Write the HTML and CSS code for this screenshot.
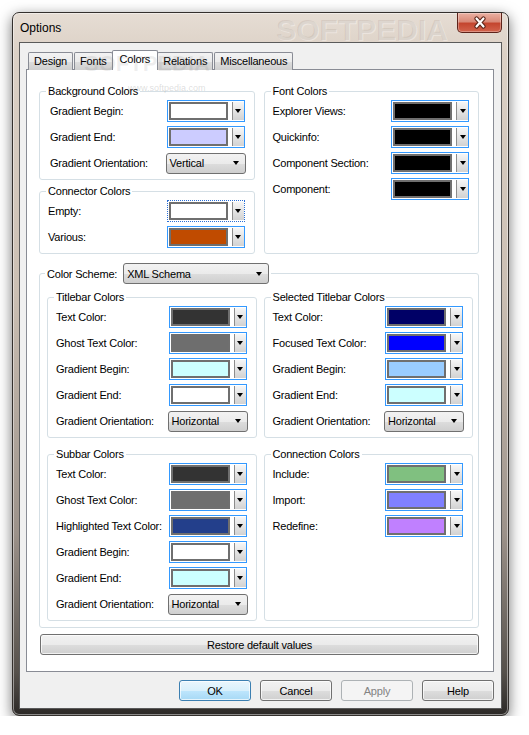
FILE: index.html
```html
<!DOCTYPE html>
<html lang="en">
  <head>
    <meta charset="UTF-8" />
    <meta name="viewport" content="width=device-width, initial-scale=1.0" />
    <title>Options</title>
    <link rel="stylesheet" href="styles.css">
  </head>
  <body>
    <div class="window">
      <div class="titlebar">
        <span class="title">Options</span>
        <span class="mark">SOFTPEDIA</span>
        <button class="close" aria-label="Close">
          <svg width="16" height="13" viewBox="0 0 16 13">
            <path d="M4.5 2.5 L11.5 10.5 M11.5 2.5 L4.5 10.5" stroke="#5a2418" stroke-width="4.2" stroke-linecap="round" fill="none" />
            <path d="M4.5 2.5 L11.5 10.5 M11.5 2.5 L4.5 10.5" stroke="#fff" stroke-width="2.2" stroke-linecap="round" fill="none" />
          </svg>
        </button>
      </div>

      <div class="client">
        <span class="mark-tabs">SOFTPEDIA</span>
        <span class="mark-url">www.softpedia.com</span>

        <div class="tabs">
          <div class="tab">Design</div>
          <div class="tab">Fonts</div>
          <div class="tab active">Colors</div>
          <div class="tab">Relations</div>
          <div class="tab">Miscellaneous</div>
        </div>

        <div class="panel">
          <div class="top-row">
            <div class="col">
              <fieldset class="group indent">
                <legend>Background Colors</legend>
                <div class="row"><label>Gradient Begin:</label><div class="picker"><span class="swatch" style="background:#ffffff"></span><span class="drop"></span></div></div>
                <div class="row"><label>Gradient End:</label><div class="picker"><span class="swatch" style="background:#ccccff"></span><span class="drop"></span></div></div>
                <div class="row"><label>Gradient Orientation:</label><div class="combo"><span>Vertical</span></div></div>
              </fieldset>

              <fieldset class="group">
                <legend>Connector Colors</legend>
                <div class="row"><label>Empty:</label><div class="picker focused"><span class="swatch" style="background:#ffffff"></span><span class="drop"></span></div></div>
                <div class="row"><label>Various:</label><div class="picker"><span class="swatch" style="background:#c04b00"></span><span class="drop"></span></div></div>
              </fieldset>
            </div>

            <fieldset class="group">
              <legend>Font Colors</legend>
              <div class="row"><label>Explorer Views:</label><div class="picker"><span class="swatch" style="background:#000000"></span><span class="drop"></span></div></div>
              <div class="row"><label>Quickinfo:</label><div class="picker"><span class="swatch" style="background:#000000"></span><span class="drop"></span></div></div>
              <div class="row"><label>Component Section:</label><div class="picker"><span class="swatch" style="background:#000000"></span><span class="drop"></span></div></div>
              <div class="row"><label>Component:</label><div class="picker"><span class="swatch" style="background:#000000"></span><span class="drop"></span></div></div>
            </fieldset>
          </div>

          <fieldset class="group scheme">
            <legend><span>Color Scheme:</span><div class="combo wide"><span>XML Schema</span></div></legend>

            <div class="inner">
              <fieldset class="group">
                <legend>Titlebar Colors</legend>
                <div class="row"><label>Text Color:</label><div class="picker"><span class="swatch" style="background:#333333"></span><span class="drop"></span></div></div>
                <div class="row"><label>Ghost Text Color:</label><div class="picker"><span class="swatch" style="background:#6e6e6e"></span><span class="drop"></span></div></div>
                <div class="row"><label>Gradient Begin:</label><div class="picker"><span class="swatch" style="background:#ccffff"></span><span class="drop"></span></div></div>
                <div class="row"><label>Gradient End:</label><div class="picker"><span class="swatch" style="background:#ffffff"></span><span class="drop"></span></div></div>
                <div class="row"><label>Gradient Orientation:</label><div class="combo"><span>Horizontal</span></div></div>
              </fieldset>

              <fieldset class="group">
                <legend>Selected Titlebar Colors</legend>
                <div class="row"><label>Text Color:</label><div class="picker"><span class="swatch" style="background:#000066"></span><span class="drop"></span></div></div>
                <div class="row"><label>Focused Text Color:</label><div class="picker"><span class="swatch" style="background:#0000ff"></span><span class="drop"></span></div></div>
                <div class="row"><label>Gradient Begin:</label><div class="picker"><span class="swatch" style="background:#99ccff"></span><span class="drop"></span></div></div>
                <div class="row"><label>Gradient End:</label><div class="picker"><span class="swatch" style="background:#ccffff"></span><span class="drop"></span></div></div>
                <div class="row"><label>Gradient Orientation:</label><div class="combo"><span>Horizontal</span></div></div>
              </fieldset>

              <fieldset class="group">
                <legend>Subbar Colors</legend>
                <div class="row"><label>Text Color:</label><div class="picker"><span class="swatch" style="background:#333333"></span><span class="drop"></span></div></div>
                <div class="row"><label>Ghost Text Color:</label><div class="picker"><span class="swatch" style="background:#6e6e6e"></span><span class="drop"></span></div></div>
                <div class="row"><label>Highlighted Text Color:</label><div class="picker"><span class="swatch" style="background:#233f8b"></span><span class="drop"></span></div></div>
                <div class="row"><label>Gradient Begin:</label><div class="picker"><span class="swatch" style="background:#ffffff"></span><span class="drop"></span></div></div>
                <div class="row"><label>Gradient End:</label><div class="picker"><span class="swatch" style="background:#ccffff"></span><span class="drop"></span></div></div>
                <div class="row"><label>Gradient Orientation:</label><div class="combo"><span>Horizontal</span></div></div>
              </fieldset>

              <fieldset class="group">
                <legend>Connection Colors</legend>
                <div class="row"><label>Include:</label><div class="picker"><span class="swatch" style="background:#80c080"></span><span class="drop"></span></div></div>
                <div class="row"><label>Import:</label><div class="picker"><span class="swatch" style="background:#8080ff"></span><span class="drop"></span></div></div>
                <div class="row"><label>Redefine:</label><div class="picker"><span class="swatch" style="background:#c080ff"></span><span class="drop"></span></div></div>
              </fieldset>
            </div>
          </fieldset>

          <button class="btn restore">Restore default values</button>
        </div>

        <div class="buttons">
          <button class="btn default">OK</button>
          <button class="btn">Cancel</button>
          <button class="btn" disabled>Apply</button>
          <button class="btn">Help</button>
        </div>
      </div>
    </div>
  </body>
</html>
```

FILE: styles.css
```css
* {
  box-sizing: border-box;
}

body {
  margin: 0;
  background: #fff;
  font-family: "Liberation Sans", Arial, sans-serif;
  font-size: 11px;
  letter-spacing: -0.2px;
  color: #000;
}

/* Window frame */
.window {
  position: relative;
  display: flex;
  flex-direction: column;
  width: 497px;
  height: 704px;
  margin: 12px 0 0 12px;
  padding: 0 6px 6px;
  border: 1px solid #34302d;
  border-radius: 7px;
  background: linear-gradient(180deg, #e6ddd4 0px, #dcd1c6 40px, #cbbfb3 280px, #9c928a 520px, #55504b 660px, #2a2725 704px);
  box-shadow: 0 4px 14px rgba(0, 0, 0, 0.55), inset 0 0 0 1px rgba(255, 255, 255, 0.45);
}

.titlebar {
  position: relative;
  display: flex;
  align-items: center;
  height: 29px;
}

.title {
  padding-left: 1px;
  font-size: 12px;
  letter-spacing: 0;
}

.mark {
  position: absolute;
  left: 257px;
  top: 0;
  font-size: 30px;
  font-weight: bold;
  letter-spacing: 0;
  color: rgba(140, 128, 116, 0.16);
  text-shadow: 1px 1px 0 rgba(255, 255, 255, 0.35);
  pointer-events: none;
}

.close {
  align-self: flex-start;
  display: flex;
  align-items: center;
  justify-content: center;
  width: 45px;
  height: 20px;
  margin-left: auto;
  padding: 0;
  border: 1px solid #5d231a;
  border-top: none;
  border-radius: 0 0 5px 5px;
  background: linear-gradient(180deg, #eab0a2 0%, #d98a78 45%, #c4462f 55%, #d2644d 100%);
  box-shadow: inset 0 0 0 1px rgba(255, 255, 255, 0.3);
}

/* Client area */
.client {
  position: relative;
  flex: 1;
  display: flex;
  flex-direction: column;
  padding: 7px 7px 0 6px;
  background: #f0f0f0;
  border: 1px solid #5a5a5a;
}

.mark-tabs {
  position: absolute;
  left: 64px;
  top: 8px;
  z-index: 3;
  font-size: 22px;
  font-weight: bold;
  letter-spacing: 0;
  color: rgba(120, 120, 120, 0.12);
  pointer-events: none;
}

.mark-url {
  position: absolute;
  left: 108px;
  top: 40px;
  z-index: 3;
  font-size: 9px;
  letter-spacing: 0;
  color: rgba(120, 120, 120, 0.25);
  pointer-events: none;
}

.tabs {
  position: relative;
  z-index: 1;
  display: flex;
  align-items: flex-end;
  gap: 1px;
  height: 20px;
  padding-left: 2px;
}

.tab {
  height: 18px;
  padding: 0 5px;
  line-height: 17px;
  border: 1px solid #898c95;
  border-bottom: none;
  border-radius: 2px 2px 0 0;
  background: linear-gradient(180deg, #f3f3f3 0%, #ebebeb 50%, #dddddd 51%, #cfcfcf 100%);
}

.tab.active {
  position: relative;
  z-index: 2;
  height: 20px;
  margin: 0 -2px;
  padding: 0 7px;
  line-height: 17px;
  background: #fff;
}

.panel {
  flex: 1;
  margin-top: -1px;
  padding: 14px 14px 0 12px;
  background: #fff;
  border: 1px solid #898c95;
}

/* Group boxes */
.top-row {
  display: grid;
  grid-template-columns: 1fr 1fr;
  gap: 9px;
}

.col {
  display: flex;
  flex-direction: column;
  gap: 4px;
}

.group {
  min-width: 0;
  margin: 0;
  padding: 2px 9px 5px 8px;
  border: 1px solid #d5dfe5;
  border-radius: 3px;
}

.group legend {
  margin-left: -2px;
  padding: 0 2px;
  line-height: 14px;
}

.group.indent .row label {
  padding-left: 2px;
}

.row {
  display: flex;
  align-items: center;
  height: 22px;
}

.row + .row {
  margin-top: 4px;
}

.row label {
  margin-right: auto;
  white-space: nowrap;
}

.picker {
  display: flex;
  gap: 4px;
  width: 78px;
  height: 22px;
  padding: 1px 0 1px 1px;
  border: 1px solid #3399ff;
  background: #fff;
}

.picker.focused {
  border-style: dotted;
  border-color: #2a6fd6;
}

.swatch {
  flex: 1;
  border: 2px solid #6f6f6f;
}

.drop {
  display: flex;
  align-items: center;
  justify-content: center;
  width: 12px;
  border-left: 1px solid #8c8c8c;
  background: linear-gradient(180deg, #f6f6f6 0%, #e4e4e4 50%, #d2d2d2 100%);
}

.drop::after,
.combo::after {
  content: "";
  border-top: 4px solid #000;
  border-left: 3.5px solid transparent;
  border-right: 3.5px solid transparent;
}

.combo {
  display: flex;
  align-items: center;
  justify-content: space-between;
  width: 80px;
  height: 21px;
  margin-right: -1px;
  padding: 0 6px 0 3px;
  border: 1px solid #707070;
  border-radius: 3px;
  background: linear-gradient(180deg, #f2f2f2 0%, #ebebeb 50%, #dddddd 51%, #cfcfcf 100%);
}

.combo.wide {
  width: 146px;
  margin: 0;
}

.scheme {
  margin-top: 9px;
  padding: 6px 5px 6px 7px;
}

.scheme > legend {
  display: flex;
  align-items: center;
  gap: 6px;
}

.inner {
  display: grid;
  grid-template-columns: 1fr 1fr;
  column-gap: 7px;
  row-gap: 9px;
}

/* Buttons */
.btn {
  height: 21px;
  padding: 0;
  font-family: inherit;
  font-size: 11px;
  letter-spacing: -0.2px;
  color: #000;
  border: 1px solid #707070;
  border-radius: 3px;
  background: linear-gradient(180deg, #f2f2f2 0%, #ebebeb 50%, #dddddd 51%, #cfcfcf 100%);
  box-shadow: inset 0 0 0 1px rgba(255, 255, 255, 0.7);
}

.restore {
  display: block;
  width: 439px;
  margin: 6px 0 0 1px;
}

.buttons {
  display: flex;
  justify-content: flex-end;
  gap: 9px;
  margin: 8px 0 7px;
}

.buttons .btn {
  width: 72px;
}

.btn.default {
  border-color: #3c7fb1;
  background: linear-gradient(180deg, #eaf6fd 0%, #d9f0fc 50%, #bee6fd 51%, #a7d9f5 100%);
}

.btn:disabled {
  color: #838383;
  border-color: #adb2b5;
  background: #f4f4f4;
  box-shadow: none;
}
```
